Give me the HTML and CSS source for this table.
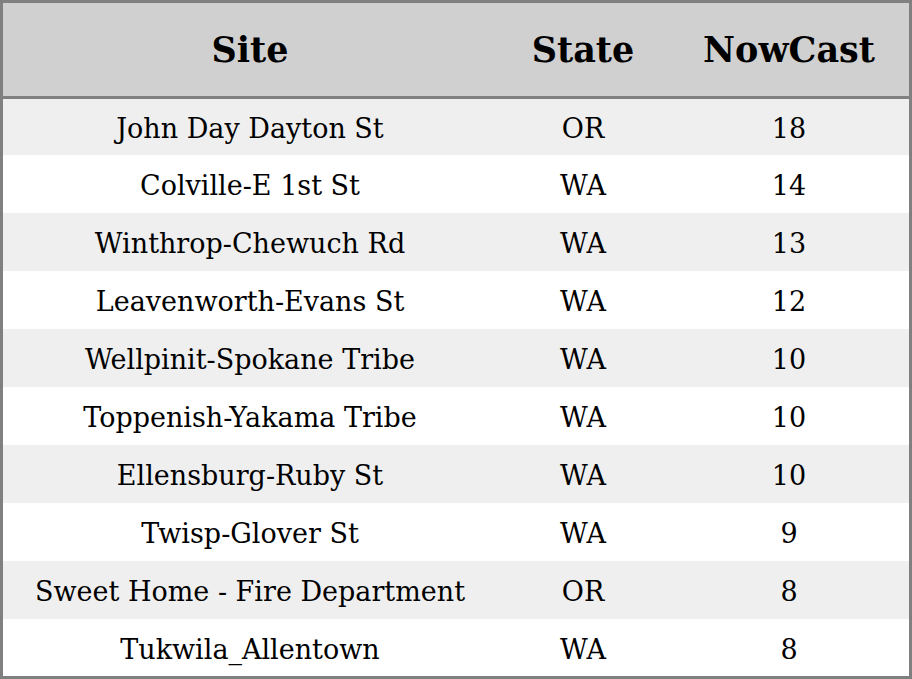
FILE: index.html
```html
<!DOCTYPE html>
<html>
<head>
<meta charset="utf-8">
<link rel="stylesheet" href="styles.css">
</head>
<body>
<table class="grid">
  <colgroup>
    <col class="c-site">
    <col class="c-state">
    <col class="c-now">
  </colgroup>
  <thead>
    <tr><th>Site</th><th>State</th><th>NowCast</th></tr>
  </thead>
  <tbody>
    <tr><td>John Day Dayton St</td><td>OR</td><td>18</td></tr>
    <tr><td>Colville-E 1st St</td><td>WA</td><td>14</td></tr>
    <tr><td>Winthrop-Chewuch Rd</td><td>WA</td><td>13</td></tr>
    <tr><td>Leavenworth-Evans St</td><td>WA</td><td>12</td></tr>
    <tr><td>Wellpinit-Spokane Tribe</td><td>WA</td><td>10</td></tr>
    <tr><td>Toppenish-Yakama Tribe</td><td>WA</td><td>10</td></tr>
    <tr><td>Ellensburg-Ruby St</td><td>WA</td><td>10</td></tr>
    <tr><td>Twisp-Glover St</td><td>WA</td><td>9</td></tr>
    <tr><td>Sweet Home - Fire Department</td><td>OR</td><td>8</td></tr>
    <tr><td>Tukwila_Allentown</td><td>WA</td><td>8</td></tr>
  </tbody>
</table>
</body>
</html>
```
FILE: styles.css
```css
html, body {
  margin: 0;
  padding: 0;
  background: #ffffff;
}
.grid {
  width: 912px;
  border-collapse: separate;
  border-spacing: 0;
  border: 3px solid #808080;
  table-layout: fixed;
  font-family: "DejaVu Serif", serif;
  color: #000;
}
.c-site { width: 494px; }
.c-state { width: 172px; }
.c-now { width: 240px; }
.grid th {
  background: #d0d0d0;
  height: 93px;
  padding: 0;
  font-size: 35px;
  line-height: 40px;
  font-weight: bold;
  text-align: center;
  border-bottom: 3px solid #808080;
}
.grid td {
  height: 58px;
  padding: 4px 0 0;
  font-size: 27px;
  line-height: 32px;
  text-align: center;
  box-sizing: border-box;
}
.grid tbody tr:first-child td {
  height: 56px;
}
.grid tbody tr:last-child td {
  height: 57px;
}
.grid tbody tr:nth-child(odd) td {
  background: #efefef;
}
```
